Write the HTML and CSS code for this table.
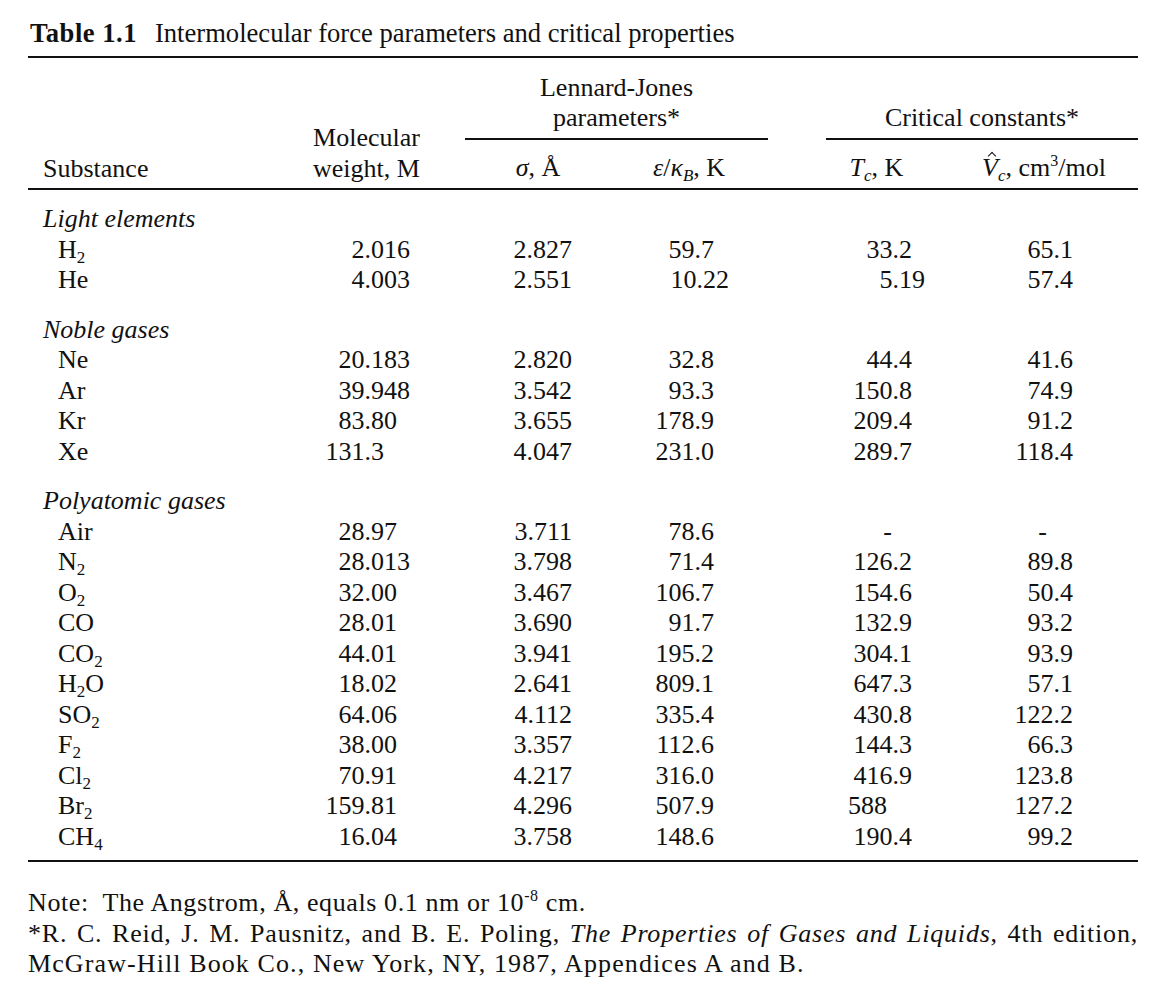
FILE: index.html
```html
<!DOCTYPE html>
<html lang="en">
<head>
<meta charset="utf-8">
<title>Table 1.1</title>
<link rel="stylesheet" href="styles.css">
</head>
<body>
<div class="page">
  <p class="caption"><b class="cap-num">Table 1.1</b><span class="cap-text">Intermolecular force parameters and critical properties</span></p>
  <table class="data">
    <colgroup>
      <col class="c-sub"><col class="c-mw"><col class="c-sig"><col class="c-eps"><col class="c-gap"><col class="c-tc"><col class="c-vc">
    </colgroup>
    <thead>
      <tr class="hr1">
        <th rowspan="2" class="h-sub">Substance</th>
        <th rowspan="2" class="h-mw">Molecular<br>weight, M</th>
        <th colspan="2" class="h-group">Lennard-Jones<br>parameters*</th>
        <th class="h-gap"></th>
        <th colspan="2" class="h-group">Critical constants*</th>
      </tr>
      <tr class="hr2">
        <th class="h-sig"><i>σ</i>, Å</th>
        <th class="h-eps"><i>ε</i>/<i>κ<sub>B</sub></i>, K</th>
        <th class="h-gap"></th>
        <th class="h-tc"><i>T<sub>c</sub></i>, K</th>
        <th class="h-vc"><i class="vhat">V<span class="hat" aria-hidden="true"></span><sub>c</sub></i>, cm<sup>3</sup>/mol</th>
      </tr>
    </thead>
    <tbody>
      <tr class="sec first"><td colspan="7">Light elements</td></tr>
      <tr><td class="name">H<sub>2</sub></td><td class="mw">2.016</td><td class="sig">2.827</td><td class="eps">59.7</td><td></td><td class="tc">33.2</td><td class="vc">65.1</td></tr>
      <tr><td class="name">He</td><td class="mw">4.003</td><td class="sig">2.551</td><td class="eps d2">10.22</td><td></td><td class="tc d2">5.19</td><td class="vc">57.4</td></tr>

      <tr class="sec"><td colspan="7">Noble gases</td></tr>
      <tr><td class="name">Ne</td><td class="mw">20.183</td><td class="sig">2.820</td><td class="eps">32.8</td><td></td><td class="tc">44.4</td><td class="vc">41.6</td></tr>
      <tr><td class="name">Ar</td><td class="mw">39.948</td><td class="sig">3.542</td><td class="eps">93.3</td><td></td><td class="tc">150.8</td><td class="vc">74.9</td></tr>
      <tr><td class="name">Kr</td><td class="mw d2">83.80</td><td class="sig">3.655</td><td class="eps">178.9</td><td></td><td class="tc">209.4</td><td class="vc">91.2</td></tr>
      <tr><td class="name">Xe</td><td class="mw d1">131.3</td><td class="sig">4.047</td><td class="eps">231.0</td><td></td><td class="tc">289.7</td><td class="vc">118.4</td></tr>

      <tr class="sec"><td colspan="7">Polyatomic gases</td></tr>
      <tr><td class="name">Air</td><td class="mw d2">28.97</td><td class="sig">3.711</td><td class="eps">78.6</td><td></td><td class="tc dash">-</td><td class="vc dash">-</td></tr>
      <tr><td class="name">N<sub>2</sub></td><td class="mw">28.013</td><td class="sig">3.798</td><td class="eps">71.4</td><td></td><td class="tc">126.2</td><td class="vc">89.8</td></tr>
      <tr><td class="name">O<sub>2</sub></td><td class="mw d2">32.00</td><td class="sig">3.467</td><td class="eps">106.7</td><td></td><td class="tc">154.6</td><td class="vc">50.4</td></tr>
      <tr><td class="name">CO</td><td class="mw d2">28.01</td><td class="sig">3.690</td><td class="eps">91.7</td><td></td><td class="tc">132.9</td><td class="vc">93.2</td></tr>
      <tr><td class="name">CO<sub>2</sub></td><td class="mw d2">44.01</td><td class="sig">3.941</td><td class="eps">195.2</td><td></td><td class="tc">304.1</td><td class="vc">93.9</td></tr>
      <tr><td class="name">H<sub>2</sub>O</td><td class="mw d2">18.02</td><td class="sig">2.641</td><td class="eps">809.1</td><td></td><td class="tc">647.3</td><td class="vc">57.1</td></tr>
      <tr><td class="name">SO<sub>2</sub></td><td class="mw d2">64.06</td><td class="sig">4.112</td><td class="eps">335.4</td><td></td><td class="tc">430.8</td><td class="vc">122.2</td></tr>
      <tr><td class="name">F<sub>2</sub></td><td class="mw d2">38.00</td><td class="sig">3.357</td><td class="eps">112.6</td><td></td><td class="tc">144.3</td><td class="vc">66.3</td></tr>
      <tr><td class="name">Cl<sub>2</sub></td><td class="mw d2">70.91</td><td class="sig">4.217</td><td class="eps">316.0</td><td></td><td class="tc">416.9</td><td class="vc">123.8</td></tr>
      <tr><td class="name">Br<sub>2</sub></td><td class="mw d2">159.81</td><td class="sig">4.296</td><td class="eps">507.9</td><td></td><td class="tc d0">588</td><td class="vc">127.2</td></tr>
      <tr class="last"><td class="name">CH<sub>4</sub></td><td class="mw d2">16.04</td><td class="sig">3.758</td><td class="eps">148.6</td><td></td><td class="tc">190.4</td><td class="vc">99.2</td></tr>
    </tbody>
  </table>
  <div class="notes">
    <p class="n1">Note:&nbsp; The Angstrom, Å, equals 0.1 nm or 10<sup>-8</sup> cm.</p>
    <p class="n2">*R. C. Reid, J. M. Pausnitz, and B. E. Poling, <i>The Properties of Gases and Liquids</i>, 4th edition,</p>
    <p class="n3">McGraw-Hill Book Co., New York, NY, 1987, Appendices A and B.</p>
  </div>
</div>
</body>
</html>
```

FILE: styles.css
```css
html, body {
  margin: 0;
  padding: 0;
  background: #ffffff;
}

body {
  font-family: "Liberation Serif", "Times New Roman", serif;
  font-size: 26px;
  line-height: 30.5px;
  color: #111111;
}

.page {
  width: 1110px;
  padding: 18px 0 0 28px;
}

.caption {
  margin: 0 0 7px 2px;
  white-space: nowrap;
  font-size: 26.6px;
}

.cap-num {
  font-weight: bold;
  letter-spacing: 0.5px;
  margin-right: 18px;
}

.data {
  width: 1110px;
  border-collapse: collapse;
  table-layout: fixed;
  border-top: 2px solid #111111;
  border-bottom: 2px solid #111111;
}

.c-sub { width: 262px; }
.c-mw  { width: 175px; }
.c-sig { width: 150px; }
.c-eps { width: 153px; }
.c-gap { width: 58px; }
.c-tc  { width: 156px; }
.c-vc  { width: 156px; }

th, td {
  padding: 0;
  font-weight: normal;
  white-space: nowrap;
}

thead th {
  vertical-align: bottom;
}

.hr1 th {
  padding-top: 15px;
  padding-bottom: 4px;
}

.hr1 .h-group {
  text-align: center;
  border-bottom: 2px solid #111111;
}

.hr1 .h-gap {
  border-bottom: 2px solid transparent;
}

.hr2 {
  border-bottom: 2px solid #111111;
}

.hr2 th {
  padding-top: 13px;
  padding-bottom: 5px;
}

.h-sub {
  text-align: left;
  padding: 0 0 5px 15px;
}

.h-mw {
  text-align: center;
  padding: 0 22px 5px 0;
}

.h-sig { text-align: center; padding-right: 4px; }
.h-eps { text-align: center; padding-right: 5px; }
.h-tc  { text-align: center; padding-right: 55px; }
.h-vc  { text-align: center; padding-right: 34px; }

sub {
  font-size: 17px;
  line-height: 0;
  vertical-align: -5px;
}

sup {
  font-size: 16px;
  line-height: 0;
  vertical-align: 10px;
}

.vhat {
  position: relative;
}

.hat {
  position: absolute;
  left: 7px;
  top: 0;
  width: 5px;
  height: 5px;
  border-left: 1.5px solid #111111;
  border-top: 1.5px solid #111111;
  transform: rotate(45deg);
}

.sec td {
  font-style: italic;
  padding: 19px 0 0 15px;
  text-align: left;
}

.sec.first td {
  padding-top: 14px;
}

.last td {
  padding-bottom: 8px;
}

.name {
  padding-left: 30px;
  text-align: left;
}

.mw, .sig, .eps, .tc, .vc {
  text-align: right;
}

.mw { padding-right: 55px; }
.mw.d2 { padding-right: 68px; }
.mw.d1 { padding-right: 81px; }

.sig { padding-right: 43px; }

.eps { padding-right: 54px; }
.eps.d2 { padding-right: 39px; }

.tc { padding-right: 70px; }
.tc.d2 { padding-right: 57px; }
.tc.d0 { padding-right: 95px; }
.tc.dash { padding-right: 90px; }

.vc { padding-right: 65px; }
.vc.dash { padding-right: 91px; }

.notes {
  margin-top: 26px;
  width: 1110px;
}

.notes p {
  margin: 0;
  white-space: nowrap;
}

.notes .n1 {
  letter-spacing: 0.6px;
}

.notes .n2 {
  letter-spacing: 0.8px;
  white-space: normal;
  text-align: justify;
  text-align-last: justify;
}

.notes .n3 {
  letter-spacing: 1.1px;
}
```
